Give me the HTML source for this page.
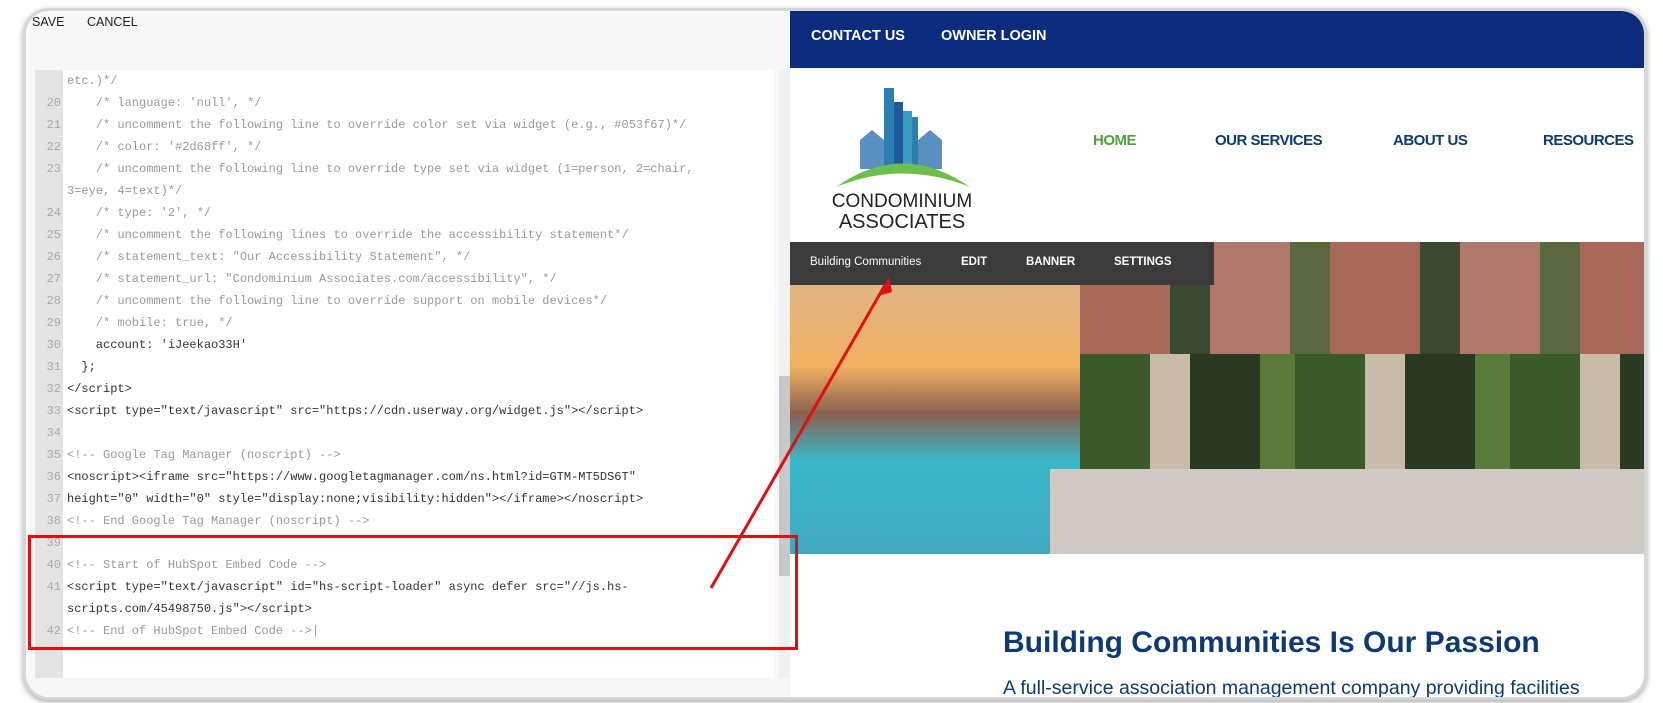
<!DOCTYPE html>
<html><head><meta charset="utf-8"><style>
*{margin:0;padding:0;box-sizing:border-box}
body{width:1663px;height:703px;background:#fff;position:relative;overflow:hidden;font-family:"Liberation Sans",sans-serif}
.frame{position:absolute;left:23px;top:8px;width:1624px;height:692px;border-radius:26px;background:#f7f7f7;border:3px solid #d6d6d6;box-shadow:0 2px 6px rgba(0,0,0,.35);overflow:hidden}
.abs{position:absolute}
.btn{font-size:12.5px;color:#222;top:4px}
.code{left:9px;top:59px;width:739px;height:608px;background:#fff}
.gut{left:0;top:0;width:28px;height:608px;background:#e3e3e3}
.ln{position:absolute;left:0;width:26px;text-align:right;font-family:"Liberation Mono",monospace;font-size:12px;color:#aaa}
.tx{position:absolute;left:32px;font-family:"Liberation Mono",monospace;font-size:12px;color:#999;white-space:pre}
.d{color:#333}
.right{left:764px;top:0;width:860px;height:700px;background:#fff}
.top{left:0;top:0;width:860px;height:57px;background:#0b2b7c}
.top span{position:absolute;top:17px;color:#fff;font-weight:bold;font-size:14.5px}
.nav{position:absolute;top:121px;font-weight:bold;font-size:15px;letter-spacing:-0.5px;color:#0c3a78}
.bar{left:0;top:231px;width:424px;height:43px;background:#3b3b3b;color:#fff}
.bar span{position:absolute;top:14px;font-size:11.5px;font-weight:bold}
</style></head><body>
<div class="frame">
 <div class="abs btn" style="left:6px">SAVE</div>
 <div class="abs btn" style="left:61px">CANCEL</div>
 <div class="abs code">
  <div class="abs gut"></div>
  <div class="tx" style="top:4px">etc.)*/</div>
  <div class="ln" style="top:26px">20</div><div class="tx" style="top:26px">    /* language: 'null', */</div>
  <div class="ln" style="top:48px">21</div><div class="tx" style="top:48px">    /* uncomment the following line to override color set via widget (e.g., #053f67)*/</div>
  <div class="ln" style="top:70px">22</div><div class="tx" style="top:70px">    /* color: '#2d68ff', */</div>
  <div class="ln" style="top:92px">23</div><div class="tx" style="top:92px">    /* uncomment the following line to override type set via widget (1=person, 2=chair,</div>
  <div class="tx" style="top:114px">3=eye, 4=text)*/</div>
  <div class="ln" style="top:136px">24</div><div class="tx" style="top:136px">    /* type: '2', */</div>
  <div class="ln" style="top:158px">25</div><div class="tx" style="top:158px">    /* uncomment the following lines to override the accessibility statement*/</div>
  <div class="ln" style="top:180px">26</div><div class="tx" style="top:180px">    /* statement_text: "Our Accessibility Statement", */</div>
  <div class="ln" style="top:202px">27</div><div class="tx" style="top:202px">    /* statement_url: "Condominium Associates.com/accessibility", */</div>
  <div class="ln" style="top:224px">28</div><div class="tx" style="top:224px">    /* uncomment the following line to override support on mobile devices*/</div>
  <div class="ln" style="top:246px">29</div><div class="tx" style="top:246px">    /* mobile: true, */</div>
  <div class="ln" style="top:268px">30</div><div class="tx d" style="top:268px">    account: 'iJeekao33H'</div>
  <div class="ln" style="top:290px">31</div><div class="tx d" style="top:290px">  };</div>
  <div class="ln" style="top:312px">32</div><div class="tx d" style="top:312px">&lt;/script&gt;</div>
  <div class="ln" style="top:334px">33</div><div class="tx d" style="top:334px">&lt;script type="text/javascript" src="https://cdn.userway.org/widget.js"&gt;&lt;/script&gt;</div>
  <div class="ln" style="top:356px">34</div>
  <div class="ln" style="top:378px">35</div><div class="tx" style="top:378px">&lt;!-- Google Tag Manager (noscript) --&gt;</div>
  <div class="ln" style="top:400px">36</div><div class="tx d" style="top:400px">&lt;noscript&gt;&lt;iframe src="https://www.googletagmanager.com/ns.html?id=GTM-MT5DS6T"</div>
  <div class="ln" style="top:422px">37</div><div class="tx d" style="top:422px">height="0" width="0" style="display:none;visibility:hidden"&gt;&lt;/iframe&gt;&lt;/noscript&gt;</div>
  <div class="ln" style="top:444px">38</div><div class="tx" style="top:444px">&lt;!-- End Google Tag Manager (noscript) --&gt;</div>
  <div class="ln" style="top:466px">39</div>
  <div class="ln" style="top:488px">40</div><div class="tx" style="top:488px">&lt;!-- Start of HubSpot Embed Code --&gt;</div>
  <div class="ln" style="top:510px">41</div><div class="tx d" style="top:510px">&lt;script type="text/javascript" id="hs-script-loader" async defer src="//js.hs-</div>
  <div class="tx d" style="top:532px">scripts.com/45498750.js"&gt;&lt;/script&gt;</div>
  <div class="ln" style="top:554px">42</div><div class="tx" style="top:554px">&lt;!-- End of HubSpot Embed Code --&gt;|</div>
 </div>
 <div class="abs" style="left:753px;top:59px;width:13px;height:608px;background:#f0f0f0"></div>
 <div class="abs" style="left:753px;top:365px;width:13px;height:200px;background:#c8c8c8"></div>
 <div class="abs right">
  <div class="abs top"><span style="left:21px">CONTACT US</span><span style="left:151px">OWNER LOGIN</span></div>
  <svg class="abs" style="left:40px;top:74px" width="160" height="150" viewBox="0 0 160 150">
   <g fill="#2a7fb0"><rect x="54" y="3" width="10" height="80"/><rect x="64" y="17" width="9" height="66" fill="#1d5a9a"/><rect x="73" y="26" width="9" height="57" fill="#3a9bc0"/><rect x="82" y="32" width="6" height="51"/></g>
   <path d="M30 84 L30 55 L42 45 L54 55 L54 84Z M88 84 L88 55 L100 45 L112 55 L112 84Z" fill="#5a8fc0"/>
   <path d="M6 102 Q72 55 140 102 Q72 75 6 102Z" fill="#6cc04a"/>
   <text x="72" y="122" text-anchor="middle" font-family="Liberation Sans,sans-serif" font-size="19" fill="#222">CONDOMINIUM</text>
   <text x="72" y="143" text-anchor="middle" font-family="Liberation Sans,sans-serif" font-size="20" fill="#222">ASSOCIATES</text>
  </svg>
  <div class="nav" style="left:303px;color:#4fa33a">HOME</div>
  <div class="nav" style="left:425px">OUR SERVICES</div>
  <div class="nav" style="left:603px">ABOUT US</div>
  <div class="nav" style="left:753px">RESOURCES</div>
  <div class="abs" style="left:0;top:231px;width:860px;height:312px;background:linear-gradient(90deg,#e8a868 0%,#c98a58 18%,#6a6a50 28%,#8a7a68 36%,#9a8a78 60%,#8a7868 100%)"></div>
  <div class="abs" style="left:0;top:231px;width:290px;height:312px;background:linear-gradient(180deg,#d8b898 0%,#f0b060 40%,#8a6050 55%,#38b8c8 70%,#40a8c0 100%)"></div>
  <div class="abs" style="left:290px;top:231px;width:570px;height:112px;background:repeating-linear-gradient(90deg,#a86858 0 90px,#3a4a30 90px 130px,#b07868 130px 210px,#5a6840 210px 250px)"></div>
  <div class="abs" style="left:290px;top:343px;width:570px;height:115px;background:repeating-linear-gradient(90deg,#3a5a2a 0 70px,#c8bca8 70px 110px,#2a3a22 110px 180px,#5a7a3a 180px 215px)"></div>
  <div class="abs" style="left:260px;top:458px;width:600px;height:85px;background:#cfcbc4"></div>
  <div class="abs bar"><span style="left:20px;font-weight:normal">Building Communities</span><span style="left:171px">EDIT</span><span style="left:236px">BANNER</span><span style="left:324px">SETTINGS</span></div>
  <div class="abs" style="left:213px;top:615px;font-size:30px;font-weight:bold;color:#0c3a78;white-space:nowrap">Building Communities Is Our Passion</div>
  <div class="abs" style="left:213px;top:666px;font-size:19.5px;color:#0c3a78;white-space:nowrap">A full-service association management company providing facilities</div>
 </div>
</div>
<div class="abs" style="left:28px;top:535px;width:770px;height:115px;border:3px solid #e01010"></div>
<svg class="abs" style="left:0;top:0" width="1663" height="703"><line x1="711" y1="588" x2="885" y2="285" stroke="#e01010" stroke-width="3"/><path d="M889 277 L878 296 L892 292Z" fill="#e01010"/></svg>
</body></html>
